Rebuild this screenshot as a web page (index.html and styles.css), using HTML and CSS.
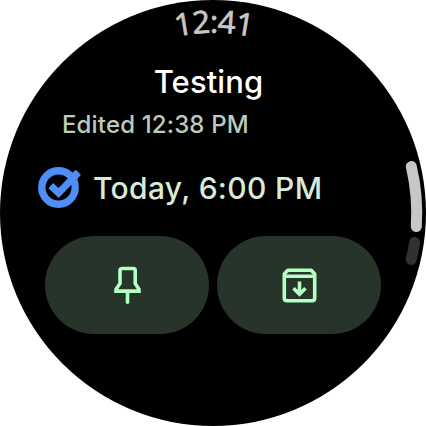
FILE: index.html
```html
<!DOCTYPE html>
<html lang="en">
<head>
<meta charset="utf-8">
<title>Testing</title>
<link rel="stylesheet" href="styles.css">
</head>
<body>
<main class="watch">
  <svg class="overlay" viewBox="0 0 426 426" aria-hidden="true">
    <path id="clock-arc" d="M33 213.8a181 181 0 0 1 362 0" fill="none"/>
    <text class="clock" text-anchor="middle"><textPath href="#clock-arc" startOffset="50%" textLength="76">12:41</textPath></text>
    <path class="thumb" d="M411.3 166.5A203.7 203.7 0 0 1 416.3 226.5"/>
    <path class="track" d="M414.6 242.5A203.7 203.7 0 0 1 411.2 259.5"/>
  </svg>
  <header class="heading">
    <h1 class="title">Testing</h1>
    <p class="edited">Edited 12:38 PM</p>
  </header>
  <section class="reminder">
    <svg class="task-icon" viewBox="0 0 46 46" aria-hidden="true">
      <circle cx="20.5" cy="25.5" r="16.7" fill="none" stroke="#4f8ef7" stroke-width="7.4"/>
      <path d="M12.8 23.6L20.6 31L37.6 13.4" fill="none" stroke="#4f8ef7" stroke-width="7"/>
      <path d="M37.8 8.8L41.8 12.9L37.6 17.4L33.2 13.2Z" fill="#4f8ef7" stroke="#4f8ef7" stroke-width="1.6" stroke-linejoin="round"/>
    </svg>
    <span class="due">Today, 6:00 PM</span>
  </section>
  <div class="actions">
    <button class="action" aria-label="Pin">
      <svg class="icon" viewBox="-3 0 60 60">
        <path d="M22.5 13.5H33.5Q35.2 13.5 35.2 15.2V28.5L39 34.2V36.1H16V34.2L20 28.5V15.2Q20 13.5 22.5 13.5Z"/>
        <path d="M27.5 37V47.2" stroke-linecap="round"/>
      </svg>
    </button>
    <button class="action" aria-label="Archive">
      <svg class="icon" viewBox="-1 0 60 60">
        <path d="M17.8 15.2H41.2L44.7 19V43Q44.7 45.7 42 45.7H17Q14.3 45.7 14.3 43V19Z" stroke-linejoin="round"/>
        <path d="M14.5 21.2H44.5M29.5 26.5V39M23.5 33.2L29.5 39.2L35.5 33.2"/>
      </svg>
    </button>
  </div>
</main>
</body>
</html>
```
FILE: styles.css
```css
* { box-sizing: border-box; }
body {
  margin: 0;
  background: #fff;
  font-family: Inter, "Open Sans", sans-serif;
}
.watch {
  position: relative;
  width: 426px;
  height: 426px;
  padding: 62px 45px 0;
  border-radius: 50%;
  background: #000;
  overflow: hidden;
}
.overlay { position: absolute; inset: 0; width: 426px; height: 426px; }
.clock { font: 400 31px "Open Sans", sans-serif; fill: #c8c6c6; stroke: #c8c6c6; stroke-width: 0.8px; }
.thumb, .track { fill: none; stroke-width: 11; stroke-linecap: round; }
.thumb { stroke: #c7c7c7; }
.track { stroke: #303231; }
.heading { height: 94px; }
.title {
  margin: 0;
  padding-right: 9px;
  text-align: center;
  color: #fff;
  font-size: 31px;
  line-height: 40px;
  font-weight: 500;
  letter-spacing: 0.1px;
}
.edited {
  margin: 8px 0 0 17px;
  color: #bccbbd;
  font-size: 24px;
  line-height: 30px;
  font-weight: 500;
  letter-spacing: 0.15px;
  white-space: nowrap;
}
.reminder {
  display: flex;
  align-items: center;
  gap: 9px;
  height: 64px;
  margin-left: -7px;
}
.task-icon { flex: none; width: 46px; height: 46px; margin-top: -6px; }
.due {
  color: #d9ead9;
  font-size: 30px;
  font-weight: 500;
  letter-spacing: 0.34px;
  white-space: nowrap;
}
.actions { display: flex; gap: 8px; margin-top: 16px; }
.action {
  display: grid;
  place-items: center;
  width: 164px;
  height: 98px;
  padding: 0;
  border: 0;
  border-radius: 49px;
  background: #263429;
}
.icon { width: 60px; height: 60px; fill: none; stroke: #b4ffc4; stroke-width: 3.6; }
```
